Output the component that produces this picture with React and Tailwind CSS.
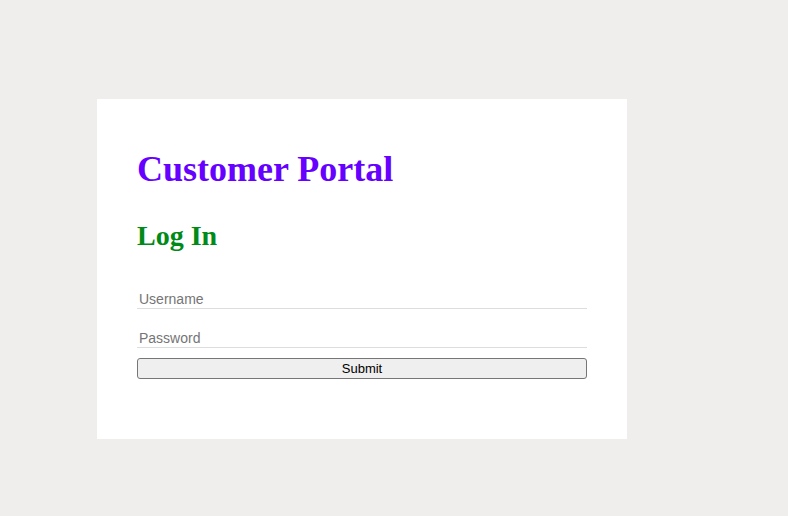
import React, { useState } from 'react';

// ── Login card ────────────────────────────────────────────────────
const LoginCard = () => {
  const [username, setUsername] = useState('');
  const [password, setPassword] = useState('');

  return (
    <div className="w-[530px] bg-white px-10 pt-10 pb-[60px]">
      <h1
        className="mt-[10px] text-[36px] leading-[40px] font-bold text-[#6600ff]"
        style={{ fontFamily: '"Liberation Serif", "Times New Roman", serif' }}
      >
        Customer Portal
      </h1>
      <h2
        className="mt-[31px] text-[28px] leading-[31px] font-bold text-[#008a17]"
        style={{ fontFamily: '"Liberation Serif", "Times New Roman", serif' }}
      >
        Log In
      </h2>

      <form
        className="mt-[39px] flex flex-col"
        style={{ fontFamily: '"Liberation Sans", Arial, sans-serif' }}
        onSubmit={(e) => e.preventDefault()}
      >
        <input
          type="text"
          value={username}
          onChange={(e) => setUsername(e.target.value)}
          placeholder="Username"
          className="h-[19px] w-full border-b border-[#dddddd] px-[2px] text-[14px] leading-4 text-gray-800 placeholder:text-[#757575] outline-none"
        />
        <input
          type="password"
          value={password}
          onChange={(e) => setPassword(e.target.value)}
          placeholder="Password"
          className="mt-5 h-[19px] w-full border-b border-[#dddddd] px-[2px] text-[14px] leading-4 text-gray-800 placeholder:text-[#757575] outline-none"
        />
        <button
          type="submit"
          className="mt-[10px] h-[21px] w-full rounded-[3px] border border-[#767676] bg-[#efefef] text-[13px] leading-4 text-black"
        >
          Submit
        </button>
      </form>
    </div>
  );
};

export default function App() {
  return (
    <div className="min-h-[516px] w-full bg-[#efeeec] pt-[99px] pl-[97px]">
      <LoginCard />
    </div>
  );
}
